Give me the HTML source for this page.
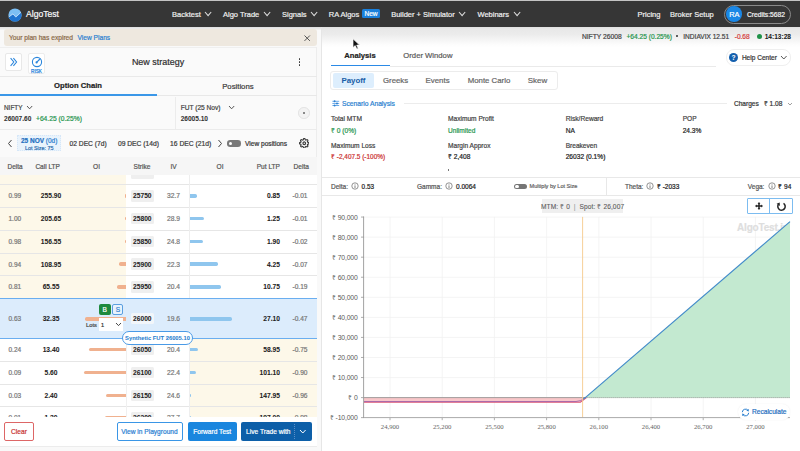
<!DOCTYPE html>
<html><head><meta charset="utf-8">
<style>
*{box-sizing:border-box;margin:0;padding:0}
html,body{width:800px;height:451px;overflow:hidden;background:#fff;font-family:"Liberation Sans",sans-serif;color:#333;position:relative}
.t{position:absolute;white-space:nowrap;line-height:1;-webkit-text-stroke:0.2px currentColor}
.r{position:absolute}
</style></head><body>
<div class="r" style="left:0px;top:0px;width:800px;height:1px;background:#c4c4c4;"></div>
<div class="r" style="left:0px;top:1px;width:800px;height:26px;background:#363636;"></div>
<svg class="r" style="left:8px;top:7.6px" width="14" height="14" viewBox="0 0 14 14"><defs><clipPath id="lc"><circle cx="7" cy="7" r="6.6"/></clipPath></defs><circle cx="7" cy="7" r="6.6" fill="#7cbff4"/><path clip-path="url(#lc)" d="M0 9.6 L5 5.9 L7.8 9.1 L14 3.4 L14 14 L0 14Z" fill="#1f74d0"/><path clip-path="url(#lc)" d="M0 9.6 L5 5.9 L7.8 9.1 L14 3.4" fill="none" stroke="#e8f4ff" stroke-width="0.7"/></svg>
<div class="t" style="left:26.00px;top:10.00px;font-size:8.6px;color:#fafafa;">AlgoTest</div>
<div class="t" style="left:172.00px;top:11.00px;font-size:7.5px;color:#efefef;">Backtest</div>
<svg class="r" style="left:203.8px;top:11.299999999999999px" width="8.2" height="5.6"><path d="M1 1 L4.1 4.6 L7.2 1" fill="none" stroke="#dedede" stroke-width="1.05"/></svg>
<div class="t" style="left:223.00px;top:11.00px;font-size:7.5px;color:#efefef;">Algo Trade</div>
<svg class="r" style="left:262.9px;top:11.299999999999999px" width="8.2" height="5.6"><path d="M1 1 L4.1 4.6 L7.2 1" fill="none" stroke="#dedede" stroke-width="1.05"/></svg>
<div class="t" style="left:282.00px;top:11.00px;font-size:7.5px;color:#efefef;">Signals</div>
<svg class="r" style="left:310.09999999999997px;top:11.299999999999999px" width="8.2" height="5.6"><path d="M1 1 L4.1 4.6 L7.2 1" fill="none" stroke="#dedede" stroke-width="1.05"/></svg>
<div class="t" style="left:391.20px;top:11.00px;font-size:7.5px;color:#efefef;">Builder + Simulator</div>
<svg class="r" style="left:458.09999999999997px;top:11.299999999999999px" width="8.2" height="5.6"><path d="M1 1 L4.1 4.6 L7.2 1" fill="none" stroke="#dedede" stroke-width="1.05"/></svg>
<div class="t" style="left:477.50px;top:11.00px;font-size:7.5px;color:#efefef;">Webinars</div>
<svg class="r" style="left:512.5px;top:11.299999999999999px" width="8.2" height="5.6"><path d="M1 1 L4.1 4.6 L7.2 1" fill="none" stroke="#dedede" stroke-width="1.05"/></svg>
<div class="t" style="left:328.80px;top:11.00px;font-size:7.5px;color:#efefef;">RA Algos</div>
<div class="r" style="left:362px;top:9.2px;width:18px;height:9.0px;background:#1a80dc;border-radius:1.5px"></div>
<div class="t" style="left:171.00px;width:400px;text-align:center;top:11.00px;font-size:6.6px;color:#fff;">New</div>
<div class="t" style="left:637.50px;top:11.00px;font-size:7.5px;color:#efefef;">Pricing</div>
<div class="t" style="left:670.00px;top:11.00px;font-size:7.5px;color:#efefef;">Broker Setup</div>
<div class="r" style="left:724.2px;top:4.5px;width:67px;height:19.3px;border:1px solid #8a8a8a;border-radius:10px"></div>
<div class="r" style="left:726.4px;top:6.3px;width:15.6px;height:15.6px;border-radius:50%;background:#1a87e6"></div>
<div class="t" style="left:534.20px;width:400px;text-align:center;top:11.00px;font-size:7.4px;color:#fff;letter-spacing:-0.3px">RA</div>
<div class="t" style="left:747.00px;top:12.00px;font-size:6.7px;color:#f4f4f4;">Credits:5682</div>
<div class="r" style="left:0px;top:27px;width:321px;height:424px;background:#f9f9f9;"></div>
<div class="r" style="left:0px;top:27px;width:321px;height:2.5px;background:linear-gradient(#dedede,#f4f4f4);"></div>
<div class="r" style="left:4px;top:29.4px;width:313px;height:16.700000000000003px;background:#eee8df;border-radius:3px"></div>
<div class="t" style="left:9.00px;top:35.00px;font-size:6.65px;color:#8a6a48;">Your plan has expired</div>
<div class="t" style="left:77.60px;top:35.00px;font-size:6.6px;color:#2a7fd0;">View Plans</div>
<svg class="r" style="left:304.3px;top:34.7px" width="6.4" height="6.4"><path d="M0.5 0.5 L5.9 5.9 M5.9 0.5 L0.5 5.9" stroke="#444" stroke-width="0.9"/></svg>
<div class="r" style="left:0px;top:47px;width:317px;height:399px;background:#fafafa;"></div>
<div class="r" style="left:0px;top:47px;width:317px;height:0.6000000000000014px;background:#efefef;"></div>
<div class="r" style="left:316.4px;top:47px;width:0.6000000000000227px;height:399px;background:#ededed;"></div>
<div class="r" style="left:0px;top:76px;width:317px;height:0.7000000000000028px;background:#e9e9e9;"></div>
<div class="r" style="left:4.5px;top:53.4px;width:17.7px;height:18px;background:#fff;border:0.8px solid #e8e8e8;border-radius:2px"></div>
<svg class="r" style="left:9px;top:57px" width="10" height="10"><path d="M1.6 1.2 L4.8 5 L1.6 8.8 M4.4 1.2 L7.6 5 L4.4 8.8" fill="none" stroke="#2b86dc" stroke-width="1.05"/></svg>
<div class="r" style="left:27.5px;top:53.4px;width:17.7px;height:20.8px;background:#fff;border:0.8px solid #ececec;border-radius:2px"></div>
<svg class="r" style="left:30.8px;top:56.2px" width="12" height="12"><circle cx="6" cy="6" r="4.6" fill="none" stroke="#2b86dc" stroke-width="1.1"/><path d="M5.3 6.7 L9 3" stroke="#2b86dc" stroke-width="1.2"/><circle cx="5.6" cy="6.4" r="1.1" fill="#2b86dc"/></svg>
<div class="t" style="left:-163.50px;width:400px;text-align:center;top:70.00px;font-size:4.7px;color:#2b86dc;-webkit-text-stroke:0.25px currentColor">RISK</div>
<div class="t" style="left:-42.00px;width:400px;text-align:center;top:58.00px;font-size:8.96px;color:#2e2e2e;">New strategy</div>
<div class="r" style="left:299.15px;top:58.45px;width:1.3px;height:1.3px;border-radius:50%;background:#333"></div>
<div class="r" style="left:299.15px;top:61.45px;width:1.3px;height:1.3px;border-radius:50%;background:#333"></div>
<div class="r" style="left:299.15px;top:64.44999999999999px;width:1.3px;height:1.3px;border-radius:50%;background:#333"></div>
<div class="t" style="left:-122.00px;width:400px;text-align:center;top:82.00px;font-size:7.65px;color:#222;font-weight:700;-webkit-text-stroke:0.05px currentColor;-webkit-text-stroke:0.2px currentColor">Option Chain</div>
<div class="t" style="left:37.90px;width:400px;text-align:center;top:83.00px;font-size:7.75px;color:#3a3a3a;">Positions</div>
<div class="r" style="left:0px;top:94px;width:157px;height:1.7999999999999972px;background:#3a97e8;"></div>
<div class="r" style="left:157px;top:95.3px;width:160px;height:1.0px;background:#e8e8e8;"></div>
<div class="r" style="left:175.3px;top:96.5px;width:1.0px;height:32.0px;background:#ececec;"></div>
<div class="t" style="left:4.00px;top:105.00px;font-size:6.4px;color:#444;">NIFTY</div>
<svg class="r" style="left:26.4px;top:105.0px" width="7.2" height="4.8"><path d="M1 1 L3.6 3.8 L6.2 1" fill="none" stroke="#444" stroke-width="0.9"/></svg>
<div class="t" style="left:4.00px;top:116.00px;font-size:6.55px;color:#333;font-weight:700;-webkit-text-stroke:0.05px currentColor;">26007.60</div>
<div class="t" style="left:36.00px;top:116.00px;font-size:6.7px;color:#26954e;">+64.25 (0.25%)</div>
<div class="t" style="left:180.70px;top:105.00px;font-size:6.6px;color:#444;">FUT (25 Nov)</div>
<svg class="r" style="left:228.4px;top:105.0px" width="7.2" height="4.8"><path d="M1 1 L3.6 3.8 L6.2 1" fill="none" stroke="#444" stroke-width="0.9"/></svg>
<div class="t" style="left:180.70px;top:116.00px;font-size:6.55px;color:#333;font-weight:700;-webkit-text-stroke:0.05px currentColor;">26005.10</div>
<div class="r" style="left:298.2px;top:107.2px;width:11.6px;height:11.6px;border-radius:50%;border:1px solid #e2e2e2;background:#f3f3f3"></div>
<div class="r" style="left:303.3px;top:112.3px;width:1.4px;height:1.4px;border-radius:50%;background:#777"></div>
<div class="r" style="left:0px;top:129.1px;width:317px;height:0.8000000000000114px;background:#ebebeb;"></div>
<svg class="r" style="left:7px;top:139px" width="6" height="9"><path d="M4.5 1 L1.5 4.5 L4.5 8" fill="none" stroke="#444" stroke-width="1"/></svg>
<div class="r" style="left:17.2px;top:135.3px;width:44px;height:16.1px;background:#e9f3fc;border:0.6px dotted #d6e7f8"></div>
<div class="t" style="left:21.00px;top:138.00px;font-size:6.47px;color:#1f6fc0;"><b style="color:#1f6fc0">25 NOV</b> <span style="color:#2f7fd0">(0d)</span></div>
<div class="t" style="left:-160.80px;width:400px;text-align:center;top:146.00px;font-size:5.4px;color:#2f6fb0;">Lot Size: 75</div>
<div class="t" style="left:69.50px;top:141.00px;font-size:6.7px;color:#3a3a3a;">02 DEC (7d)</div>
<div class="t" style="left:117.90px;top:141.00px;font-size:6.74px;color:#3a3a3a;">09 DEC (14d)</div>
<div class="t" style="left:170.10px;top:141.00px;font-size:6.74px;color:#3a3a3a;">16 DEC (21d)</div>
<svg class="r" style="left:217px;top:139px" width="6" height="9"><path d="M1.5 1 L4.5 4.5 L1.5 8" fill="none" stroke="#444" stroke-width="1"/></svg>
<div class="r" style="left:227px;top:140.3px;width:13.8px;height:6.4px;border-radius:3.2px;background:#7a7a7a"></div>
<div class="r" style="left:228.6px;top:141.6px;width:3.8px;height:3.8px;border-radius:50%;background:#fff"></div>
<div class="t" style="left:245.00px;top:141.00px;font-size:6.6px;color:#333;">View positions</div>
<svg class="r" style="left:298.8px;top:137.6px" width="10.5" height="10.5" viewBox="0 0 24 24"><path fill="none" stroke="#3a3a3a" stroke-width="2.6" d="M12 15a3 3 0 1 0 0-6 3 3 0 0 0 0 6Z"/><path fill="none" stroke="#3a3a3a" stroke-width="2.6" d="M19.4 15a1.65 1.65 0 0 0 .33 1.82l.06.06a2 2 0 1 1-2.83 2.83l-.06-.06a1.65 1.65 0 0 0-1.82-.33 1.65 1.65 0 0 0-1 1.51V21a2 2 0 1 1-4 0v-.09A1.65 1.65 0 0 0 9 19.4a1.65 1.65 0 0 0-1.82.33l-.06.06a2 2 0 1 1-2.83-2.83l.06-.06A1.65 1.65 0 0 0 4.68 15a1.65 1.65 0 0 0-1.51-1H3a2 2 0 1 1 0-4h.09A1.65 1.65 0 0 0 4.6 9a1.65 1.65 0 0 0-.33-1.82l-.06-.06a2 2 0 1 1 2.83-2.83l.06.06A1.65 1.65 0 0 0 9 4.68a1.65 1.65 0 0 0 1-1.51V3a2 2 0 1 1 4 0v.09a1.65 1.65 0 0 0 1 1.51 1.65 1.65 0 0 0 1.82-.33l.06-.06a2 2 0 1 1 2.83 2.83l-.06.06A1.65 1.65 0 0 0 19.4 9a1.65 1.65 0 0 0 1.51 1H21a2 2 0 1 1 0 4h-.09a1.65 1.65 0 0 0-1.51 1Z"/></svg>
<div class="r" style="left:0px;top:156.6px;width:317px;height:0.8000000000000114px;background:#e6e6e6;"></div>
<div class="r" style="left:0px;top:157.4px;width:317px;height:17.599999999999994px;background:#f6f6f6;"></div>
<div class="t" style="left:7.60px;top:164.00px;font-size:6.43px;color:#555;">Delta</div>
<div class="t" style="left:35.40px;top:164.00px;font-size:6.54px;color:#555;">Call LTP</div>
<div class="t" style="left:-103.50px;width:400px;text-align:center;top:164.00px;font-size:6.6px;color:#555;">OI</div>
<div class="t" style="left:-58.00px;width:400px;text-align:center;top:164.00px;font-size:6.57px;color:#555;">Strike</div>
<div class="t" style="left:-26.50px;width:400px;text-align:center;top:164.00px;font-size:6.6px;color:#555;">IV</div>
<div class="t" style="left:20.00px;width:400px;text-align:center;top:164.00px;font-size:6.6px;color:#555;">OI</div>
<div class="t" style="right:520.00px;top:164.00px;font-size:6.6px;color:#555;">Put LTP</div>
<div class="t" style="right:491.00px;top:164.00px;font-size:6.6px;color:#555;">Delta</div>
<div class="r" style="left:0;top:175px;width:317px;height:242px;overflow:hidden">
<div class="r" style="left:0.00px;top:-13.26px;width:126.20px;height:22.76px;background:#fdf8e9;"></div>
<div class="r" style="left:126.20px;top:-13.26px;width:63.30px;height:22.76px;background:#ffffff;"></div>
<div class="r" style="left:189.50px;top:-13.26px;width:127.50px;height:22.76px;background:#ffffff;"></div>
<div class="t" style="left:8.50px;top:-7.00px;font-size:6.5px;color:#777;">1.00</div>
<div class="t" style="left:-149.00px;width:400px;text-align:center;top:-7.00px;font-size:6.7px;color:#222;font-weight:700;-webkit-text-stroke:0.05px currentColor;">305.00</div>
<div class="r" style="left:125.00px;top:-3.58px;width:1.20px;height:3.50px;background:#f0b18f;border-radius:1.7px 0 0 1.7px"></div>
<div class="r" style="left:130.60px;top:-7.58px;width:23.40px;height:11.40px;background:#efefef;border-radius:1.5px"></div>
<div class="t" style="left:-57.70px;width:400px;text-align:center;top:-7.00px;font-size:6.65px;color:#222;font-weight:700;-webkit-text-stroke:0.05px currentColor;">25700</div>
<div class="t" style="left:-26.50px;width:400px;text-align:center;top:-7.00px;font-size:6.7px;color:#777;">35.1</div>
<div class="r" style="left:190.00px;top:-3.58px;width:4.00px;height:3.50px;background:#8fc6ee;border-radius:0 1.7px 1.7px 0"></div>
<div class="t" style="right:37.00px;top:-7.00px;font-size:6.7px;color:#222;font-weight:700;-webkit-text-stroke:0.05px currentColor;">0.70</div>
<div class="t" style="right:9.50px;top:-7.00px;font-size:6.6px;color:#777;">-0.01</div>
<div class="r" style="left:0.00px;top:9.50px;width:126.20px;height:22.76px;background:#fdf8e9;"></div>
<div class="r" style="left:126.20px;top:9.50px;width:63.30px;height:22.76px;background:#ffffff;"></div>
<div class="r" style="left:189.50px;top:9.50px;width:127.50px;height:22.76px;background:#ffffff;"></div>
<div class="t" style="left:8.50px;top:18.00px;font-size:6.5px;color:#777;">0.99</div>
<div class="t" style="left:-149.00px;width:400px;text-align:center;top:18.00px;font-size:6.7px;color:#222;font-weight:700;-webkit-text-stroke:0.05px currentColor;">255.90</div>
<div class="r" style="left:124.60px;top:19.18px;width:1.60px;height:3.50px;background:#f0b18f;border-radius:1.7px 0 0 1.7px"></div>
<div class="r" style="left:130.60px;top:15.18px;width:23.40px;height:11.40px;background:#efefef;border-radius:1.5px"></div>
<div class="t" style="left:-57.70px;width:400px;text-align:center;top:18.00px;font-size:6.65px;color:#222;font-weight:700;-webkit-text-stroke:0.05px currentColor;">25750</div>
<div class="t" style="left:-26.50px;width:400px;text-align:center;top:18.00px;font-size:6.7px;color:#777;">32.7</div>
<div class="r" style="left:190.00px;top:19.18px;width:6.50px;height:3.50px;background:#8fc6ee;border-radius:0 1.7px 1.7px 0"></div>
<div class="t" style="right:37.00px;top:18.00px;font-size:6.7px;color:#222;font-weight:700;-webkit-text-stroke:0.05px currentColor;">0.85</div>
<div class="t" style="right:9.50px;top:18.00px;font-size:6.6px;color:#777;">-0.01</div>
<div class="r" style="left:0.00px;top:32.26px;width:126.20px;height:22.76px;background:#fdf8e9;"></div>
<div class="r" style="left:126.20px;top:32.26px;width:63.30px;height:22.76px;background:#ffffff;"></div>
<div class="r" style="left:189.50px;top:32.26px;width:127.50px;height:22.76px;background:#ffffff;"></div>
<div class="t" style="left:8.50px;top:41.00px;font-size:6.5px;color:#777;">1.00</div>
<div class="t" style="left:-149.00px;width:400px;text-align:center;top:41.00px;font-size:6.7px;color:#222;font-weight:700;-webkit-text-stroke:0.05px currentColor;">205.65</div>
<div class="r" style="left:124.60px;top:41.94px;width:1.60px;height:3.50px;background:#f0b18f;border-radius:1.7px 0 0 1.7px"></div>
<div class="r" style="left:130.60px;top:37.94px;width:23.40px;height:11.40px;background:#efefef;border-radius:1.5px"></div>
<div class="t" style="left:-57.70px;width:400px;text-align:center;top:41.00px;font-size:6.65px;color:#222;font-weight:700;-webkit-text-stroke:0.05px currentColor;">25800</div>
<div class="t" style="left:-26.50px;width:400px;text-align:center;top:41.00px;font-size:6.7px;color:#777;">28.9</div>
<div class="r" style="left:190.00px;top:41.94px;width:14.00px;height:3.50px;background:#8fc6ee;border-radius:0 1.7px 1.7px 0"></div>
<div class="t" style="right:37.00px;top:41.00px;font-size:6.7px;color:#222;font-weight:700;-webkit-text-stroke:0.05px currentColor;">1.25</div>
<div class="t" style="right:9.50px;top:41.00px;font-size:6.6px;color:#777;">-0.01</div>
<div class="r" style="left:0.00px;top:55.02px;width:126.20px;height:22.76px;background:#fdf8e9;"></div>
<div class="r" style="left:126.20px;top:55.02px;width:63.30px;height:22.76px;background:#ffffff;"></div>
<div class="r" style="left:189.50px;top:55.02px;width:127.50px;height:22.76px;background:#ffffff;"></div>
<div class="t" style="left:8.50px;top:64.00px;font-size:6.5px;color:#777;">0.98</div>
<div class="t" style="left:-149.00px;width:400px;text-align:center;top:64.00px;font-size:6.7px;color:#222;font-weight:700;-webkit-text-stroke:0.05px currentColor;">156.55</div>
<div class="r" style="left:124.60px;top:64.70px;width:1.60px;height:3.50px;background:#f0b18f;border-radius:1.7px 0 0 1.7px"></div>
<div class="r" style="left:130.60px;top:60.70px;width:23.40px;height:11.40px;background:#efefef;border-radius:1.5px"></div>
<div class="t" style="left:-57.70px;width:400px;text-align:center;top:64.00px;font-size:6.65px;color:#222;font-weight:700;-webkit-text-stroke:0.05px currentColor;">25850</div>
<div class="t" style="left:-26.50px;width:400px;text-align:center;top:64.00px;font-size:6.7px;color:#777;">24.8</div>
<div class="r" style="left:190.00px;top:64.70px;width:13.00px;height:3.50px;background:#8fc6ee;border-radius:0 1.7px 1.7px 0"></div>
<div class="t" style="right:37.00px;top:64.00px;font-size:6.7px;color:#222;font-weight:700;-webkit-text-stroke:0.05px currentColor;">1.90</div>
<div class="t" style="right:9.50px;top:64.00px;font-size:6.6px;color:#777;">-0.02</div>
<div class="r" style="left:0.00px;top:77.78px;width:126.20px;height:22.76px;background:#fdf8e9;"></div>
<div class="r" style="left:126.20px;top:77.78px;width:63.30px;height:22.76px;background:#ffffff;"></div>
<div class="r" style="left:189.50px;top:77.78px;width:127.50px;height:22.76px;background:#ffffff;"></div>
<div class="t" style="left:8.50px;top:87.00px;font-size:6.5px;color:#777;">0.94</div>
<div class="t" style="left:-149.00px;width:400px;text-align:center;top:87.00px;font-size:6.7px;color:#222;font-weight:700;-webkit-text-stroke:0.05px currentColor;">108.95</div>
<div class="r" style="left:118.70px;top:87.46px;width:7.50px;height:3.50px;background:#f0b18f;border-radius:1.7px 0 0 1.7px"></div>
<div class="r" style="left:130.60px;top:83.46px;width:23.40px;height:11.40px;background:#efefef;border-radius:1.5px"></div>
<div class="t" style="left:-57.70px;width:400px;text-align:center;top:87.00px;font-size:6.65px;color:#222;font-weight:700;-webkit-text-stroke:0.05px currentColor;">25900</div>
<div class="t" style="left:-26.50px;width:400px;text-align:center;top:87.00px;font-size:6.7px;color:#777;">22.3</div>
<div class="r" style="left:190.00px;top:87.46px;width:28.00px;height:3.50px;background:#8fc6ee;border-radius:0 1.7px 1.7px 0"></div>
<div class="t" style="right:37.00px;top:87.00px;font-size:6.7px;color:#222;font-weight:700;-webkit-text-stroke:0.05px currentColor;">4.25</div>
<div class="t" style="right:9.50px;top:87.00px;font-size:6.6px;color:#777;">-0.07</div>
<div class="r" style="left:0.00px;top:100.54px;width:126.20px;height:22.76px;background:#fdf8e9;"></div>
<div class="r" style="left:126.20px;top:100.54px;width:63.30px;height:22.76px;background:#ffffff;"></div>
<div class="r" style="left:189.50px;top:100.54px;width:127.50px;height:22.76px;background:#ffffff;"></div>
<div class="t" style="left:8.50px;top:109.00px;font-size:6.5px;color:#777;">0.81</div>
<div class="t" style="left:-149.00px;width:400px;text-align:center;top:109.00px;font-size:6.7px;color:#222;font-weight:700;-webkit-text-stroke:0.05px currentColor;">65.55</div>
<div class="r" style="left:116.60px;top:110.22px;width:9.60px;height:3.50px;background:#f0b18f;border-radius:1.7px 0 0 1.7px"></div>
<div class="r" style="left:130.60px;top:106.22px;width:23.40px;height:11.40px;background:#efefef;border-radius:1.5px"></div>
<div class="t" style="left:-57.70px;width:400px;text-align:center;top:109.00px;font-size:6.65px;color:#222;font-weight:700;-webkit-text-stroke:0.05px currentColor;">25950</div>
<div class="t" style="left:-26.50px;width:400px;text-align:center;top:109.00px;font-size:6.7px;color:#777;">20.4</div>
<div class="r" style="left:190.00px;top:110.22px;width:31.20px;height:3.50px;background:#8fc6ee;border-radius:0 1.7px 1.7px 0"></div>
<div class="t" style="right:37.00px;top:109.00px;font-size:6.7px;color:#222;font-weight:700;-webkit-text-stroke:0.05px currentColor;">10.75</div>
<div class="t" style="right:9.50px;top:109.00px;font-size:6.6px;color:#777;">-0.19</div>
<div class="r" style="left:0.00px;top:123.30px;width:317.00px;height:40.00px;background:#dcecfc;"></div>
<div class="t" style="left:8.50px;top:141.00px;font-size:6.5px;color:#777;">0.63</div>
<div class="t" style="left:-149.00px;width:400px;text-align:center;top:141.00px;font-size:6.7px;color:#222;font-weight:700;-webkit-text-stroke:0.05px currentColor;">32.35</div>
<div class="r" style="left:85.30px;top:142.10px;width:40.90px;height:3.50px;background:#f0b18f;border-radius:1.7px 0 0 1.7px"></div>
<div class="r" style="left:130.60px;top:138.10px;width:23.40px;height:11.40px;background:#f2f6fa;border-radius:1.5px"></div>
<div class="t" style="left:-57.70px;width:400px;text-align:center;top:141.00px;font-size:6.65px;color:#222;font-weight:700;-webkit-text-stroke:0.05px currentColor;">26000</div>
<div class="t" style="left:-26.50px;width:400px;text-align:center;top:141.00px;font-size:6.7px;color:#777;">19.6</div>
<div class="r" style="left:190.00px;top:142.10px;width:42.00px;height:3.50px;background:#8fc6ee;border-radius:0 1.7px 1.7px 0"></div>
<div class="t" style="right:37.00px;top:141.00px;font-size:6.7px;color:#222;font-weight:700;-webkit-text-stroke:0.05px currentColor;">27.10</div>
<div class="t" style="right:9.50px;top:141.00px;font-size:6.6px;color:#777;">-0.47</div>
<div class="r" style="left:0.00px;top:163.30px;width:126.20px;height:22.76px;background:#ffffff;"></div>
<div class="r" style="left:126.20px;top:163.30px;width:63.30px;height:22.76px;background:#ffffff;"></div>
<div class="r" style="left:189.50px;top:163.30px;width:127.50px;height:22.76px;background:#fdf8e9;"></div>
<div class="t" style="left:8.50px;top:172.00px;font-size:6.5px;color:#777;">0.24</div>
<div class="t" style="left:-149.00px;width:400px;text-align:center;top:172.00px;font-size:6.7px;color:#222;font-weight:700;-webkit-text-stroke:0.05px currentColor;">13.40</div>
<div class="r" style="left:88.60px;top:172.98px;width:37.60px;height:3.50px;background:#f0b18f;border-radius:1.7px 0 0 1.7px"></div>
<div class="r" style="left:130.60px;top:168.98px;width:23.40px;height:11.40px;background:#efefef;border-radius:1.5px"></div>
<div class="t" style="left:-57.70px;width:400px;text-align:center;top:172.00px;font-size:6.65px;color:#222;font-weight:700;-webkit-text-stroke:0.05px currentColor;">26050</div>
<div class="t" style="left:-26.50px;width:400px;text-align:center;top:172.00px;font-size:6.7px;color:#777;">20.4</div>
<div class="r" style="left:190.00px;top:172.98px;width:7.80px;height:3.50px;background:#8fc6ee;border-radius:0 1.7px 1.7px 0"></div>
<div class="t" style="right:37.00px;top:172.00px;font-size:6.7px;color:#222;font-weight:700;-webkit-text-stroke:0.05px currentColor;">58.95</div>
<div class="t" style="right:9.50px;top:172.00px;font-size:6.6px;color:#777;">-0.75</div>
<div class="r" style="left:0.00px;top:186.06px;width:126.20px;height:22.76px;background:#ffffff;"></div>
<div class="r" style="left:126.20px;top:186.06px;width:63.30px;height:22.76px;background:#ffffff;"></div>
<div class="r" style="left:189.50px;top:186.06px;width:127.50px;height:22.76px;background:#fdf8e9;"></div>
<div class="t" style="left:8.50px;top:195.00px;font-size:6.5px;color:#777;">0.09</div>
<div class="t" style="left:-149.00px;width:400px;text-align:center;top:195.00px;font-size:6.7px;color:#222;font-weight:700;-webkit-text-stroke:0.05px currentColor;">5.60</div>
<div class="r" style="left:83.90px;top:195.74px;width:42.30px;height:3.50px;background:#f0b18f;border-radius:1.7px 0 0 1.7px"></div>
<div class="r" style="left:130.60px;top:191.74px;width:23.40px;height:11.40px;background:#efefef;border-radius:1.5px"></div>
<div class="t" style="left:-57.70px;width:400px;text-align:center;top:195.00px;font-size:6.65px;color:#222;font-weight:700;-webkit-text-stroke:0.05px currentColor;">26100</div>
<div class="t" style="left:-26.50px;width:400px;text-align:center;top:195.00px;font-size:6.7px;color:#777;">22.4</div>
<div class="r" style="left:190.00px;top:195.74px;width:6.40px;height:3.50px;background:#8fc6ee;border-radius:0 1.7px 1.7px 0"></div>
<div class="t" style="right:37.00px;top:195.00px;font-size:6.7px;color:#222;font-weight:700;-webkit-text-stroke:0.05px currentColor;">101.10</div>
<div class="t" style="right:9.50px;top:195.00px;font-size:6.6px;color:#777;">-0.90</div>
<div class="r" style="left:0.00px;top:208.82px;width:126.20px;height:22.76px;background:#ffffff;"></div>
<div class="r" style="left:126.20px;top:208.82px;width:63.30px;height:22.76px;background:#ffffff;"></div>
<div class="r" style="left:189.50px;top:208.82px;width:127.50px;height:22.76px;background:#fdf8e9;"></div>
<div class="t" style="left:8.50px;top:218.00px;font-size:6.5px;color:#777;">0.03</div>
<div class="t" style="left:-149.00px;width:400px;text-align:center;top:218.00px;font-size:6.7px;color:#222;font-weight:700;-webkit-text-stroke:0.05px currentColor;">2.40</div>
<div class="r" style="left:105.60px;top:218.50px;width:20.60px;height:3.50px;background:#f0b18f;border-radius:1.7px 0 0 1.7px"></div>
<div class="r" style="left:130.60px;top:214.50px;width:23.40px;height:11.40px;background:#efefef;border-radius:1.5px"></div>
<div class="t" style="left:-57.70px;width:400px;text-align:center;top:218.00px;font-size:6.65px;color:#222;font-weight:700;-webkit-text-stroke:0.05px currentColor;">26150</div>
<div class="t" style="left:-26.50px;width:400px;text-align:center;top:218.00px;font-size:6.7px;color:#777;">24.6</div>
<div class="r" style="left:190.00px;top:218.50px;width:1.40px;height:3.50px;background:#8fc6ee;border-radius:0 1.7px 1.7px 0"></div>
<div class="t" style="right:37.00px;top:218.00px;font-size:6.7px;color:#222;font-weight:700;-webkit-text-stroke:0.05px currentColor;">147.95</div>
<div class="t" style="right:9.50px;top:218.00px;font-size:6.6px;color:#777;">-0.96</div>
<div class="r" style="left:0.00px;top:231.58px;width:126.20px;height:22.76px;background:#ffffff;"></div>
<div class="r" style="left:126.20px;top:231.58px;width:63.30px;height:22.76px;background:#ffffff;"></div>
<div class="r" style="left:189.50px;top:231.58px;width:127.50px;height:22.76px;background:#fdf8e9;"></div>
<div class="t" style="left:8.50px;top:240.00px;font-size:6.5px;color:#777;">0.01</div>
<div class="t" style="left:-149.00px;width:400px;text-align:center;top:240.00px;font-size:6.7px;color:#222;font-weight:700;-webkit-text-stroke:0.05px currentColor;">1.30</div>
<div class="r" style="left:104.70px;top:241.26px;width:21.50px;height:3.50px;background:#f0b18f;border-radius:1.7px 0 0 1.7px"></div>
<div class="r" style="left:130.60px;top:237.26px;width:23.40px;height:11.40px;background:#efefef;border-radius:1.5px"></div>
<div class="t" style="left:-57.70px;width:400px;text-align:center;top:240.00px;font-size:6.65px;color:#222;font-weight:700;-webkit-text-stroke:0.05px currentColor;">26200</div>
<div class="t" style="left:-26.50px;width:400px;text-align:center;top:240.00px;font-size:6.7px;color:#777;">27.7</div>
<div class="r" style="left:190.00px;top:241.26px;width:0.50px;height:3.50px;background:#8fc6ee;border-radius:0 1.7px 1.7px 0"></div>
<div class="t" style="right:37.00px;top:240.00px;font-size:6.7px;color:#222;font-weight:700;-webkit-text-stroke:0.05px currentColor;">197.00</div>
<div class="t" style="right:9.50px;top:240.00px;font-size:6.6px;color:#777;">-0.98</div>
<div class="r" style="left:0.00px;top:9.40px;width:317.00px;height:0.90px;background:#e6e6e6;"></div>
<div class="r" style="left:0.00px;top:32.16px;width:317.00px;height:0.90px;background:#e6e6e6;"></div>
<div class="r" style="left:0.00px;top:54.92px;width:317.00px;height:0.90px;background:#e6e6e6;"></div>
<div class="r" style="left:0.00px;top:77.68px;width:317.00px;height:0.90px;background:#e6e6e6;"></div>
<div class="r" style="left:0.00px;top:100.44px;width:317.00px;height:0.90px;background:#e6e6e6;"></div>
<div class="r" style="left:0.00px;top:123.20px;width:317.00px;height:0.90px;background:#e6e6e6;"></div>
<div class="r" style="left:0.00px;top:163.20px;width:317.00px;height:0.90px;background:#e6e6e6;"></div>
<div class="r" style="left:0.00px;top:185.96px;width:317.00px;height:0.90px;background:#e6e6e6;"></div>
<div class="r" style="left:0.00px;top:208.72px;width:317.00px;height:0.90px;background:#e6e6e6;"></div>
<div class="r" style="left:0.00px;top:231.48px;width:317.00px;height:0.90px;background:#e6e6e6;"></div>
<div class="r" style="left:0.00px;top:254.24px;width:317.00px;height:0.90px;background:#e6e6e6;"></div>
<div class="r" style="left:189.30px;top:0.00px;width:0.70px;height:123.10px;background:#eeeeee;"></div>
<div class="r" style="left:126.40px;top:163.80px;width:0.70px;height:242.00px;background:#f0f0f0;"></div>
<div class="r" style="left:189.30px;top:163.80px;width:0.70px;height:242.00px;background:#eeeeee;"></div>
</div>
<div class="r" style="left:0px;top:298.1px;width:317px;height:0.7999999999999545px;background:#6aaef0;"></div>
<div class="r" style="left:0px;top:338.0px;width:317px;height:0.8000000000000114px;background:#6aaef0;"></div>
<div class="r" style="left:99px;top:304.3px;width:11.5px;height:10.300000000000011px;background:#1e8a3e;border-radius:2px"></div>
<div class="t" style="left:-95.25px;width:400px;text-align:center;top:307.00px;font-size:6.6px;color:#fff;">B</div>
<div class="r" style="left:112.3px;top:304.3px;width:11.2px;height:10.3px;border:0.8px solid #5a9fe0;border-radius:2px;background:#e8f2fc"></div>
<div class="t" style="left:-82.10px;width:400px;text-align:center;top:307.00px;font-size:6.6px;color:#2f7fd0;">S</div>
<div class="r" style="left:99.4px;top:317.6px;width:23.599999999999994px;height:13.399999999999977px;background:#ffffff;"></div>
<div class="t" style="left:86.00px;top:323.00px;font-size:5.8px;color:#444;">Lots</div>
<div class="t" style="left:101.00px;top:323.00px;font-size:5.6px;color:#333;">1</div>
<svg class="r" style="left:114.5px;top:322.09999999999997px" width="7" height="4.6"><path d="M1 1 L3.5 3.6 L6 1" fill="none" stroke="#333" stroke-width="0.9"/></svg>
<div class="r" style="left:122px;top:330.8px;width:71.2px;height:14.4px;border:1.1px solid #4a9ae6;border-radius:7.2px;background:#fff"></div>
<div class="t" style="left:-42.50px;width:400px;text-align:center;top:336.00px;font-size:5.8px;color:#2a7fd0;font-weight:700;-webkit-text-stroke:0.05px currentColor;">Synthetic FUT 26005.10</div>
<div class="r" style="left:0px;top:417px;width:317px;height:29px;background:#ffffff;"></div>
<div class="r" style="left:4px;top:422.2px;width:30px;height:19.2px;border:0.8px solid #d66;border-radius:2px;background:#fff"></div>
<div class="t" style="left:-181.00px;width:400px;text-align:center;top:429.00px;font-size:6.6px;color:#c83232;">Clear</div>
<div class="r" style="left:116.5px;top:422.2px;width:66px;height:19.2px;border:0.8px solid #3a96e6;border-radius:2px;background:#fff"></div>
<div class="t" style="left:-50.50px;width:400px;text-align:center;top:429.00px;font-size:6.6px;color:#2a80d2;">View in Playground</div>
<div class="r" style="left:188px;top:422.2px;width:48.5px;height:19.19999999999999px;background:#1a86de;border-radius:2px"></div>
<div class="t" style="left:12.20px;width:400px;text-align:center;top:429.00px;font-size:6.6px;color:#fff;">Forward Test</div>
<div class="r" style="left:241px;top:422.2px;width:71px;height:19.19999999999999px;background:#0d5fa8;border-radius:2px"></div>
<div class="t" style="left:68.30px;width:400px;text-align:center;top:429.00px;font-size:6.6px;color:#fff;">Live Trade with</div>
<div class="r" style="left:293.5px;top:424px;width:0;height:15px;border-left:0.7px dotted #5a8fc8"></div>
<svg class="r" style="left:298.7px;top:429.1px" width="7.6" height="5"><path d="M1 1 L3.8 4 L6.6 1" fill="none" stroke="#fff" stroke-width="1"/></svg>
<div class="r" style="left:0px;top:445.5px;width:317px;height:0.8000000000000114px;background:#ececec;"></div>
<div class="r" style="left:321px;top:27px;width:1px;height:424px;background:#e6e6e6;"></div>
<div class="r" style="left:322px;top:27px;width:478px;height:424px;background:#ffffff;"></div>
<div class="r" style="left:322px;top:27px;width:478px;height:21px;background:linear-gradient(#e0e0e0 0px,#e8e8e8 2px,#ebebeb 7px,#f5f5f5 13px,#fdfdfd 18px,#ffffff 21px);"></div>
<svg class="r" style="left:352px;top:38px" width="9" height="12" viewBox="0 0 9 12"><path d="M1 0.8 L1 9.6 L3.2 7.6 L4.8 11 L6.2 10.4 L4.7 7.1 L7.6 7.1 Z" fill="#111" stroke="#fff" stroke-width="0.7"/></svg>
<div class="t" style="left:581.90px;top:34.00px;font-size:6.71px;color:#444;">NIFTY 26008</div>
<div class="t" style="left:626.40px;top:34.00px;font-size:6.64px;color:#26954e;">+64.25 (0.25%)</div>
<div class="r" style="left:676.4px;top:35.4px;width:1.8px;height:1.8px;border-radius:50%;background:#333"></div>
<div class="t" style="left:683.30px;top:34.00px;font-size:6.57px;color:#444;">INDIAVIX 12.51</div>
<div class="t" style="left:734.70px;top:34.00px;font-size:6.58px;color:#d43a3a;">-0.68</div>
<div class="r" style="left:756.8px;top:33.5px;width:5.6px;height:5.6px;border-radius:50%;background:#1f9248"></div>
<div class="t" style="left:764.70px;top:34.00px;font-size:6.57px;color:#222;font-weight:700;-webkit-text-stroke:0.05px currentColor;">14:13:28</div>
<div class="t" style="left:160.00px;width:400px;text-align:center;top:52.00px;font-size:7.63px;color:#222;font-weight:700;-webkit-text-stroke:0.05px currentColor;-webkit-text-stroke:0.2px currentColor">Analysis</div>
<div class="t" style="left:227.90px;width:400px;text-align:center;top:52.00px;font-size:7.7px;color:#5a5a5a;">Order Window</div>
<div class="r" style="left:330.9px;top:64.6px;width:58.900000000000034px;height:1.6000000000000085px;background:#2b8ae6;"></div>
<div class="r" style="left:389.8px;top:65.5px;width:326.2px;height:0.7999999999999972px;background:#eaeaea;"></div>
<div class="r" style="left:725.6px;top:49.4px;width:65.4px;height:16.2px;border:0.8px solid #efefef;border-radius:8px;background:#fff"></div>
<div class="r" style="left:729px;top:53px;width:9px;height:9px;border-radius:50%;background:#135fae"></div>
<div class="t" style="left:533.50px;width:400px;text-align:center;top:55.00px;font-size:6.6px;color:#fff;font-weight:700;-webkit-text-stroke:0.05px currentColor;">?</div>
<div class="t" style="left:741.90px;top:55.00px;font-size:6.56px;color:#333;">Help Center</div>
<svg class="r" style="left:780.2px;top:55.1px" width="7.6" height="5"><path d="M1 1 L3.8 4 L6.6 1" fill="none" stroke="#444" stroke-width="0.9"/></svg>
<div class="r" style="left:330.4px;top:71px;width:227.3px;height:18.6px;border:0.8px solid #ececec;border-radius:3px;background:#fff"></div>
<div class="r" style="left:332.5px;top:73.1px;width:41.5px;height:14.700000000000003px;background:#ddeefd;border-radius:2px"></div>
<div class="t" style="left:153.50px;width:400px;text-align:center;top:77.00px;font-size:7.85px;color:#1a5fa8;font-weight:700;-webkit-text-stroke:0.05px currentColor;">Payoff</div>
<div class="t" style="left:195.60px;width:400px;text-align:center;top:77.00px;font-size:7.82px;color:#666;">Greeks</div>
<div class="t" style="left:237.60px;width:400px;text-align:center;top:77.00px;font-size:7.85px;color:#666;">Events</div>
<div class="t" style="left:289.00px;width:400px;text-align:center;top:77.00px;font-size:7.84px;color:#666;">Monte Carlo</div>
<div class="t" style="left:337.50px;width:400px;text-align:center;top:77.00px;font-size:7.97px;color:#666;">Skew</div>
<svg class="r" style="left:331.5px;top:100px" width="8" height="7" viewBox="0 0 8 7"><path d="M0.4 1.3 H7.2 M0.4 3.45 H7.2 M0.4 5.5 H7.2" stroke="#3a8ee0" stroke-width="0.75"/><circle cx="2.6" cy="1.3" r="0.95" fill="#2a7fd0"/><circle cx="5" cy="3.45" r="0.95" fill="#2a7fd0"/><circle cx="2.6" cy="5.5" r="0.95" fill="#2a7fd0"/></svg>
<div class="t" style="left:342.00px;top:101.00px;font-size:6.71px;color:#2a7fd0;">Scenario Analysis</div>
<div class="r" style="left:404px;top:103px;width:323px;height:0.7999999999999972px;background:#ececec;"></div>
<div class="t" style="left:733.90px;top:101.00px;font-size:6.6px;color:#333;">Charges</div>
<div class="t" style="left:763.70px;top:101.00px;font-size:6.6px;color:#333;">₹ 1.08</div>
<svg class="r" style="left:787.0px;top:102.0px" width="6" height="4"><path d="M1 1 L3.0 3 L5 1" fill="none" stroke="#888" stroke-width="0.8"/></svg>
<div class="t" style="left:331.00px;top:116.00px;font-size:6.64px;color:#444;">Total MTM</div>
<div class="t" style="left:331.00px;top:128.00px;font-size:6.6px;color:#26954e;">₹ 0 (0%)</div>
<div class="t" style="left:448.00px;top:116.00px;font-size:6.6px;color:#444;">Maximum Profit</div>
<div class="t" style="left:448.00px;top:128.00px;font-size:6.57px;color:#26954e;">Unlimited</div>
<div class="t" style="left:565.70px;top:116.00px;font-size:6.63px;color:#444;">Risk/Reward</div>
<div class="t" style="left:565.70px;top:128.00px;font-size:6.6px;color:#222;">NA</div>
<div class="t" style="left:682.70px;top:116.00px;font-size:6.6px;color:#444;">POP</div>
<div class="t" style="left:682.70px;top:128.00px;font-size:6.6px;color:#222;">24.3%</div>
<div class="t" style="left:331.00px;top:143.00px;font-size:6.6px;color:#444;">Maximum Loss</div>
<div class="t" style="left:331.00px;top:154.00px;font-size:6.45px;color:#cc3333;">₹ -2,407.5 (-100%)</div>
<div class="t" style="left:448.00px;top:143.00px;font-size:6.6px;color:#444;">Margin Approx</div>
<div class="t" style="left:448.00px;top:154.00px;font-size:6.6px;color:#222;">₹ 2,408</div>
<div class="r" style="left:447.8px;top:169.4px;width:1.2px;height:1.2px;background:#777"></div>
<div class="t" style="left:565.70px;top:143.00px;font-size:6.59px;color:#444;">Breakeven</div>
<div class="t" style="left:565.70px;top:154.00px;font-size:6.61px;color:#222;">26032 (0.1%)</div>
<div class="r" style="left:322px;top:176.9px;width:478px;height:0.799999999999983px;background:#e8e8e8;"></div>
<div class="r" style="left:322px;top:194.7px;width:478px;height:0.8000000000000114px;background:#e8e8e8;"></div>
<div class="r" style="left:606px;top:177.5px;width:0.7999999999999545px;height:17.5px;background:#e8e8e8;"></div>
<div class="t" style="left:331.00px;top:184.00px;font-size:6.51px;color:#555;">Delta:</div>
<svg class="r" style="left:351px;top:182.2px" width="8" height="8"><circle cx="4" cy="4" r="3.2" fill="none" stroke="#666" stroke-width="0.7"/><path d="M4 3.4 V6" stroke="#666" stroke-width="0.8"/><circle cx="4" cy="2.3" r="0.45" fill="#666"/></svg>
<div class="t" style="left:361.60px;top:184.00px;font-size:6.4px;color:#222;">0.53</div>
<div class="t" style="left:417.00px;top:184.00px;font-size:6.52px;color:#555;">Gamma:</div>
<svg class="r" style="left:445px;top:182.2px" width="8" height="8"><circle cx="4" cy="4" r="3.2" fill="none" stroke="#666" stroke-width="0.7"/><path d="M4 3.4 V6" stroke="#666" stroke-width="0.8"/><circle cx="4" cy="2.3" r="0.45" fill="#666"/></svg>
<div class="t" style="left:456.00px;top:184.00px;font-size:6.54px;color:#222;">0.0064</div>
<div class="r" style="left:514px;top:183.6px;width:12.8px;height:5.8px;border-radius:3px;background:#757575"></div>
<div class="r" style="left:515.4px;top:184.8px;width:3.4px;height:3.4px;border-radius:50%;background:#fff"></div>
<div class="t" style="left:529.60px;top:184.00px;font-size:5.55px;color:#666;">Multiply by Lot Size</div>
<div class="t" style="left:625.00px;top:184.00px;font-size:6.5px;color:#555;">Theta:</div>
<svg class="r" style="left:646.4px;top:182.2px" width="8" height="8"><circle cx="4" cy="4" r="3.2" fill="none" stroke="#666" stroke-width="0.7"/><path d="M4 3.4 V6" stroke="#666" stroke-width="0.8"/><circle cx="4" cy="2.3" r="0.45" fill="#666"/></svg>
<div class="t" style="left:656.90px;top:184.00px;font-size:6.5px;color:#222;">₹ -2033</div>
<div class="t" style="left:747.80px;top:184.00px;font-size:6.5px;color:#555;">Vega:</div>
<svg class="r" style="left:767.5px;top:182.2px" width="8" height="8"><circle cx="4" cy="4" r="3.2" fill="none" stroke="#666" stroke-width="0.7"/><path d="M4 3.4 V6" stroke="#666" stroke-width="0.8"/><circle cx="4" cy="2.3" r="0.45" fill="#666"/></svg>
<div class="t" style="left:778.30px;top:184.00px;font-size:6.5px;color:#222;">₹ 94</div>
<svg class="r" style="left:0;top:0" width="800" height="451"><line x1="364" x2="790" y1="397.60" y2="397.60" stroke="#f1f1f1" stroke-width="0.8"/><line x1="364" x2="790" y1="377.54" y2="377.54" stroke="#f1f1f1" stroke-width="0.8"/><line x1="364" x2="790" y1="357.48" y2="357.48" stroke="#f1f1f1" stroke-width="0.8"/><line x1="364" x2="790" y1="337.42" y2="337.42" stroke="#f1f1f1" stroke-width="0.8"/><line x1="364" x2="790" y1="317.36" y2="317.36" stroke="#f1f1f1" stroke-width="0.8"/><line x1="364" x2="790" y1="297.30" y2="297.30" stroke="#f1f1f1" stroke-width="0.8"/><line x1="364" x2="790" y1="277.24" y2="277.24" stroke="#f1f1f1" stroke-width="0.8"/><line x1="364" x2="790" y1="257.18" y2="257.18" stroke="#f1f1f1" stroke-width="0.8"/><line x1="364" x2="790" y1="237.12" y2="237.12" stroke="#f1f1f1" stroke-width="0.8"/><line x1="364" x2="790" y1="217.06" y2="217.06" stroke="#f1f1f1" stroke-width="0.8"/><line x1="390.00" x2="390.00" y1="216.9" y2="417.5" stroke="#f1f1f1" stroke-width="0.8"/><line x1="442.20" x2="442.20" y1="216.9" y2="417.5" stroke="#f1f1f1" stroke-width="0.8"/><line x1="494.40" x2="494.40" y1="216.9" y2="417.5" stroke="#f1f1f1" stroke-width="0.8"/><line x1="546.60" x2="546.60" y1="216.9" y2="417.5" stroke="#f1f1f1" stroke-width="0.8"/><line x1="598.80" x2="598.80" y1="216.9" y2="417.5" stroke="#f1f1f1" stroke-width="0.8"/><line x1="651.00" x2="651.00" y1="216.9" y2="417.5" stroke="#f1f1f1" stroke-width="0.8"/><line x1="703.20" x2="703.20" y1="216.9" y2="417.5" stroke="#f1f1f1" stroke-width="0.8"/><line x1="755.40" x2="755.40" y1="216.9" y2="417.5" stroke="#f1f1f1" stroke-width="0.8"/></svg>
<div class="t" style="left:737.3px;top:219.6px;font-size:11.6px;line-height:14px;font-weight:700;color:#dedede;letter-spacing:-0.2px;transform:scaleX(0.86);transform-origin:0 0">AlgoTest.in</div>
<svg class="r" style="left:0;top:0" width="800" height="451"><path d="M585.3,397.6 L790,221.6 L790,397.6 Z" fill="#c3e9d0"/><path d="M364,397.6 L586.5,397.6 L580.4,402.2 L364,402.2 Z" fill="#f8c6c8"/><line x1="364" x2="585.3" y1="397.6" y2="397.6" stroke="#8c8c8c" stroke-width="0.8"/><line x1="585.3" x2="790" y1="397.6" y2="397.6" stroke="#8a9a8f" stroke-width="0.9" stroke-dasharray="1.2 0.8"/><path d="M364,402.3 L580.4,402.3 L586.5,397.6" fill="none" stroke="#dc5a78" stroke-width="1.1"/><path d="M364,401.5 L576,401.5 Q581.5,401.2 584.3,398.3" fill="none" stroke="#9a5aa8" stroke-width="1" stroke-opacity="0.8"/><path d="M583.3,399.1 L585.3,397.6 L790,221.6" fill="none" stroke="#3b86c8" stroke-width="1.2" stroke-opacity="0.95"/><line x1="582.6" x2="582.6" y1="216.9" y2="417.5" stroke="#f5c98c" stroke-width="0.9"/><line x1="363.6" x2="363.6" y1="216.5" y2="418" stroke="#a3a3a3" stroke-width="1"/><line x1="363.5" x2="790" y1="417.6" y2="417.6" stroke="#ababab" stroke-width="1"/><line x1="361" x2="364" y1="417.60" y2="417.60" stroke="#999" stroke-width="0.8"/><line x1="361" x2="364" y1="397.60" y2="397.60" stroke="#999" stroke-width="0.8"/><line x1="361" x2="364" y1="377.54" y2="377.54" stroke="#999" stroke-width="0.8"/><line x1="361" x2="364" y1="357.48" y2="357.48" stroke="#999" stroke-width="0.8"/><line x1="361" x2="364" y1="337.42" y2="337.42" stroke="#999" stroke-width="0.8"/><line x1="361" x2="364" y1="317.36" y2="317.36" stroke="#999" stroke-width="0.8"/><line x1="361" x2="364" y1="297.30" y2="297.30" stroke="#999" stroke-width="0.8"/><line x1="361" x2="364" y1="277.24" y2="277.24" stroke="#999" stroke-width="0.8"/><line x1="361" x2="364" y1="257.18" y2="257.18" stroke="#999" stroke-width="0.8"/><line x1="361" x2="364" y1="237.12" y2="237.12" stroke="#999" stroke-width="0.8"/><line x1="361" x2="364" y1="217.06" y2="217.06" stroke="#999" stroke-width="0.8"/><line x1="390.00" x2="390.00" y1="418" y2="420.2" stroke="#999" stroke-width="0.8"/><line x1="442.20" x2="442.20" y1="418" y2="420.2" stroke="#999" stroke-width="0.8"/><line x1="494.40" x2="494.40" y1="418" y2="420.2" stroke="#999" stroke-width="0.8"/><line x1="546.60" x2="546.60" y1="418" y2="420.2" stroke="#999" stroke-width="0.8"/><line x1="598.80" x2="598.80" y1="418" y2="420.2" stroke="#999" stroke-width="0.8"/><line x1="651.00" x2="651.00" y1="418" y2="420.2" stroke="#999" stroke-width="0.8"/><line x1="703.20" x2="703.20" y1="418" y2="420.2" stroke="#999" stroke-width="0.8"/><line x1="755.40" x2="755.40" y1="418" y2="420.2" stroke="#999" stroke-width="0.8"/></svg>
<div class="t" style="right:442.40px;top:415.00px;font-size:6.8px;color:#5a5a5a;-webkit-text-stroke:0;letter-spacing:-0.15px">₹ -10,000</div>
<div class="t" style="right:442.40px;top:395.00px;font-size:6.8px;color:#5a5a5a;-webkit-text-stroke:0;letter-spacing:-0.15px">₹ 0</div>
<div class="t" style="right:442.40px;top:375.00px;font-size:6.8px;color:#5a5a5a;-webkit-text-stroke:0;letter-spacing:-0.15px">₹ 10,000</div>
<div class="t" style="right:442.40px;top:355.00px;font-size:6.8px;color:#5a5a5a;-webkit-text-stroke:0;letter-spacing:-0.15px">₹ 20,000</div>
<div class="t" style="right:442.40px;top:335.00px;font-size:6.8px;color:#5a5a5a;-webkit-text-stroke:0;letter-spacing:-0.15px">₹ 30,000</div>
<div class="t" style="right:442.40px;top:315.00px;font-size:6.8px;color:#5a5a5a;-webkit-text-stroke:0;letter-spacing:-0.15px">₹ 40,000</div>
<div class="t" style="right:442.40px;top:295.00px;font-size:6.8px;color:#5a5a5a;-webkit-text-stroke:0;letter-spacing:-0.15px">₹ 50,000</div>
<div class="t" style="right:442.40px;top:275.00px;font-size:6.8px;color:#5a5a5a;-webkit-text-stroke:0;letter-spacing:-0.15px">₹ 60,000</div>
<div class="t" style="right:442.40px;top:255.00px;font-size:6.8px;color:#5a5a5a;-webkit-text-stroke:0;letter-spacing:-0.15px">₹ 70,000</div>
<div class="t" style="right:442.40px;top:235.00px;font-size:6.8px;color:#5a5a5a;-webkit-text-stroke:0;letter-spacing:-0.15px">₹ 80,000</div>
<div class="t" style="right:442.40px;top:215.00px;font-size:6.8px;color:#5a5a5a;-webkit-text-stroke:0;letter-spacing:-0.15px">₹ 90,000</div>
<div class="t" style="left:190.00px;width:400px;text-align:center;top:424.00px;font-size:6.7px;color:#666;font-family:'Liberation Serif',serif;-webkit-text-stroke:0">24,900</div>
<div class="t" style="left:242.20px;width:400px;text-align:center;top:424.00px;font-size:6.7px;color:#666;font-family:'Liberation Serif',serif;-webkit-text-stroke:0">25,200</div>
<div class="t" style="left:294.40px;width:400px;text-align:center;top:424.00px;font-size:6.7px;color:#666;font-family:'Liberation Serif',serif;-webkit-text-stroke:0">25,500</div>
<div class="t" style="left:346.60px;width:400px;text-align:center;top:424.00px;font-size:6.7px;color:#666;font-family:'Liberation Serif',serif;-webkit-text-stroke:0">25,800</div>
<div class="t" style="left:398.80px;width:400px;text-align:center;top:424.00px;font-size:6.7px;color:#666;font-family:'Liberation Serif',serif;-webkit-text-stroke:0">26,100</div>
<div class="t" style="left:451.00px;width:400px;text-align:center;top:424.00px;font-size:6.7px;color:#666;font-family:'Liberation Serif',serif;-webkit-text-stroke:0">26,400</div>
<div class="t" style="left:503.20px;width:400px;text-align:center;top:424.00px;font-size:6.7px;color:#666;font-family:'Liberation Serif',serif;-webkit-text-stroke:0">26,700</div>
<div class="t" style="left:555.40px;width:400px;text-align:center;top:424.00px;font-size:6.7px;color:#666;font-family:'Liberation Serif',serif;-webkit-text-stroke:0">27,000</div>
<div class="r" style="left:541.7px;top:199.1px;width:81.79999999999995px;height:13.800000000000011px;background:#efefef;"></div>
<div class="t" style="left:382.60px;width:400px;text-align:center;top:204.00px;font-size:6.6px;color:#5c5c5c;-webkit-text-stroke:0.1px currentColor;letter-spacing:0.1px">MTM: ₹ 0 &nbsp;<span style="color:#999">|</span>&nbsp; Spot: ₹ 26,007</div>
<div class="r" style="left:747.2px;top:198.3px;width:45.6px;height:15.3px;border:1px solid #7cbcf0;border-radius:1px;background:#fff"></div>
<div class="r" style="left:769.3px;top:198.3px;width:0.8000000000000682px;height:15.299999999999983px;background:#7cbcf0;"></div>
<svg class="r" style="left:753.6px;top:201px" width="10" height="10" viewBox="0 0 10 10"><path d="M5 2 V8 M2 5 H8" stroke="#222" stroke-width="1.5"/><path d="M5 1 L3.6 2.7 H6.4Z M5 9 L3.6 7.3 H6.4Z M1 5 L2.7 3.6 V6.4Z M9 5 L7.3 3.6 V6.4Z" fill="#222"/></svg>
<svg class="r" style="left:776px;top:200.6px" width="11" height="11" viewBox="0 0 11 11"><path d="M7.52 2.40 A3.7 3.7 0 1 1 2.43 3.43" fill="none" stroke="#222" stroke-width="1.5"/><path d="M3.66 1.61 L0.55 2.64 L3.87 4.88Z" fill="#222"/></svg>
<div class="r" style="left:737.8px;top:403.6px;width:52px;height:16.4px;border-radius:8px;background:#fff;box-shadow:0 0 1.5px rgba(0,0,0,0.08)"></div>
<svg class="r" style="left:740.5px;top:407.5px" width="9" height="9" viewBox="0 0 9 9"><path d="M1.3 4.2 A3.2 3.2 0 0 1 7.2 2.6 M7.7 4.8 A3.2 3.2 0 0 1 1.8 6.4" fill="none" stroke="#2a7fd0" stroke-width="1"/><path d="M7.9 0.9 L7.6 3.4 L5.2 2.6Z M1.1 8.1 L1.4 5.6 L3.8 6.4Z" fill="#2a7fd0"/></svg>
<div class="t" style="left:752.00px;top:409.00px;font-size:6.6px;color:#1f6fc0;">Recalculate</div>
</body></html>
